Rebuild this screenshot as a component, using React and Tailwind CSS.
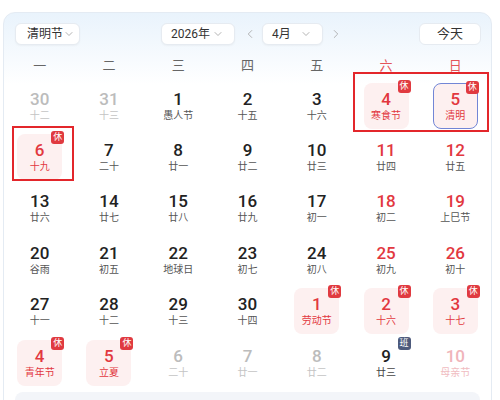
import { ChevronDown, ChevronLeft, ChevronRight } from 'lucide-react';

const weekdays = ['一', '二', '三', '四', '五', '六', '日'];

// kind: other | normal | weekend | holiday | work | otherWeekend
const days = [
  [30, '十二', 'other'], [31, '十三', 'other'], [1, '愚人节'], [2, '十五'], [3, '十六'], [4, '寒食节', 'holiday'], [5, '清明', 'holiday', true],
  [6, '十九', 'holiday'], [7, '二十'], [8, '廿一'], [9, '廿二'], [10, '廿三'], [11, '廿四', 'weekend'], [12, '廿五', 'weekend'],
  [13, '廿六'], [14, '廿七'], [15, '廿八'], [16, '廿九'], [17, '初一'], [18, '初二', 'weekend'], [19, '上巳节', 'weekend'],
  [20, '谷雨'], [21, '初五'], [22, '地球日'], [23, '初七'], [24, '初八'], [25, '初九', 'weekend'], [26, '初十', 'weekend'],
  [27, '十一'], [28, '十二'], [29, '十三'], [30, '十四'], [1, '劳动节', 'holiday'], [2, '十六', 'holiday'], [3, '十七', 'holiday'],
  [4, '青年节', 'holiday'], [5, '立夏', 'holiday'], [6, '二十', 'other'], [7, '廿一', 'other'], [8, '廿二', 'other'], [9, '廿三', 'work'], [10, '母亲节', 'otherWeekend'],
];

const numColor = {
  other: 'text-[#bcbcbc]',
  normal: 'text-[#222222]',
  weekend: 'text-[#e2383f]',
  holiday: 'text-[#e2383f]',
  work: 'text-[#222222]',
  otherWeekend: 'text-[#f0b4ba]',
};

const subColor = {
  other: 'text-[#c4c4c4]',
  normal: 'text-[#555555]',
  weekend: 'text-[#555555]',
  holiday: 'text-[#e2383f]',
  work: 'text-[#444444]',
  otherWeekend: 'text-[#f0bcc1]',
};

const Select = ({ label, className }) => (
  <div className={`flex h-[22px] shrink-0 items-center justify-between whitespace-nowrap rounded-md border border-[#e6ebf1] bg-white text-[12px] text-[#333] shadow-[0_1px_2px_rgba(0,0,0,0.04)] ${className}`}>
    <span>{label}</span>
    <ChevronDown className="h-3 w-3 shrink-0 text-[#999]" strokeWidth={1.5} />
  </div>
);

const Day = ({ n, sub, kind = 'normal', selected }) => {
  const holiday = kind === 'holiday';
  const badge = holiday ? '休' : kind === 'work' ? '班' : null;
  return (
    <div className="flex items-center justify-center">
      <div
        className={`relative flex h-[46px] w-[45px] flex-col items-center justify-center rounded-lg ${
          holiday ? 'bg-[#fdf0f0]' : ''
        } ${selected ? 'border-[1.5px] border-[#7286d6]' : ''}`}
      >
        <span className={`text-[17px] font-medium leading-[19px] ${numColor[kind]}`}>{n}</span>
        <span className={`text-[10px] leading-[13px] ${subColor[kind]}`}>{sub}</span>
        {badge && (
          <span
            className={`absolute -right-[2px] -top-[3px] flex h-[13px] w-[13px] items-center justify-center rounded-[3px] text-[9px] leading-none text-white ${
              badge === '休' ? 'bg-[#e03a40]' : 'bg-[#4d5a7c]'
            }`}
          >
            {badge}
          </span>
        )}
      </div>
    </div>
  );
};

export default function App() {
  return (
    <div
      className="h-[400px] w-[500px] overflow-hidden bg-white pl-[3px] pt-[12px]"
      style={{ fontFamily: 'Roboto, "Noto Sans CJK SC", "Noto Sans", sans-serif' }}
    >
      <div className="h-[400px] w-[489px] rounded-xl border border-[#e4ebf3] bg-gradient-to-b from-[#e9f3fc] via-white via-[18%] to-white">
        {/* Header */}
        <div className="flex items-center pl-[11px] pr-[10px] pt-[10px]">
          <Select label="清明节" className="w-[65px] pl-[11px] pr-[8px]" />
          <div className="ml-[81px] flex items-center">
            <Select label="2026年" className="w-[74px] pl-[9px] pr-[10px]" />
            <ChevronLeft className="ml-[8px] h-3.5 w-3.5 text-[#aaa]" strokeWidth={1.5} />
            <Select label="4月" className="ml-[5px] w-[61px] pl-[9px] pr-[10px]" />
            <ChevronRight className="ml-[6px] h-3.5 w-3.5 text-[#aaa]" strokeWidth={1.5} />
          </div>
          <button className="ml-auto flex h-[22px] w-[62px] items-center justify-center rounded-md border border-[#e6ebf1] bg-white text-[13px] text-[#333]">
            今天
          </button>
        </div>

        {/* Calendar */}
        <div className="relative mt-[7px] px-[1px]">
          <div className="grid h-[28px] grid-cols-7 items-center text-[13px]">
            {weekdays.map((w, i) => (
              <div key={w} className={`text-center ${i > 4 ? 'text-[#e4545a]' : 'text-[#666]'}`}>
                {w}
              </div>
            ))}
          </div>
          <div className="grid grid-cols-7 auto-rows-[51.4px]">
            {days.map(([n, sub, kind, selected], i) => (
              <Day key={i} n={n} sub={sub} kind={kind} selected={selected} />
            ))}
          </div>

          {/* annotation boxes */}
          <div className="pointer-events-none absolute left-[349px] top-[20px] h-[60px] w-[136px] border-2 border-[#e3262b]" />
          <div className="pointer-events-none absolute left-[8px] top-[74px] h-[55px] w-[62px] border-2 border-[#e3262b]" />
        </div>

        <div className="mx-[11px] mt-[4px] h-[20px] rounded-lg bg-[#f3f5f9]" />
      </div>
    </div>
  );
}
